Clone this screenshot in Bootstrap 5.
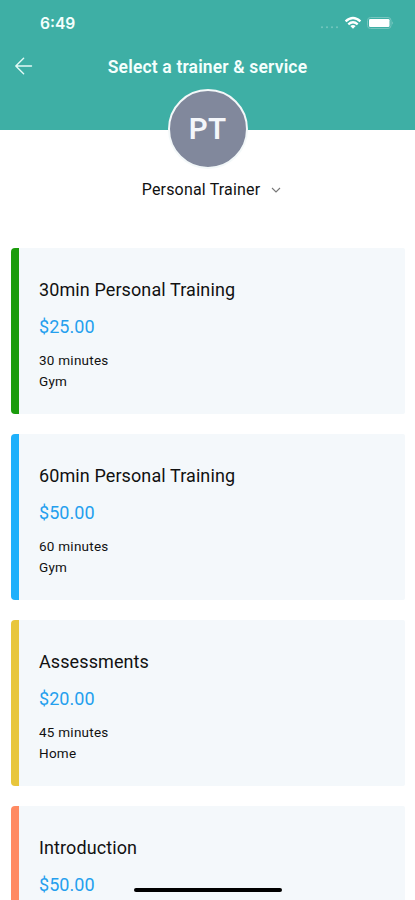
<!DOCTYPE html>
<html lang="en">
<head>
<meta charset="utf-8">
<meta name="viewport" content="width=device-width, initial-scale=1">
<title>Select a trainer &amp; service</title>
<link href="https://cdn.jsdelivr.net/npm/bootstrap@5.3.0/dist/css/bootstrap.min.css" rel="stylesheet">
<style>
body { font-family: Roboto, "Liberation Sans", sans-serif; color: #111; }
.screen { height: 900px; }
.top-area { height: 129.5px; background: #3eafa5; color: #f4fffd; }
.status-row { height: 46px; padding: 0 21px 0 40px; }
.clock { font-family: Inter, sans-serif; font-size: 15.6px; font-weight: 600; line-height: 46px; padding-top: 1px; }
.title-row { height: 40px; padding-left: 15px; padding-right: 15px; }
.page-title { font-size: 17.5px; font-weight: 600; line-height: 40px; letter-spacing: .16px; padding-top: 1px; }
.side { width: 18px; }
.avatar { width: 80px; height: 80px; margin-top: -41px; border: 2px solid #f3f8f9; background: #81889c; color: #f4f6fa; font-size: 29.5px; font-weight: 600; letter-spacing: .3px; padding-top: 1px; }
.trainer { height: 24px; margin-top: 9px; font-size: 16px; letter-spacing: .17px; line-height: 24px; padding-left: 9px; }
.services { padding: 46.5px 10px 0 11px; gap: 20px; }
.service { height: 166px; border: 0; border-left: 7.5px solid var(--tone); border-radius: 4px 2px 2px 4px; background: #f4f8fb; padding: 29px 0 0 20px; color: #111; }
.service h2 { font-size: 18px; font-weight: 400; line-height: 26px; letter-spacing: .1px; margin: 0 0 12px; }
.service { border-left-width: 8px; }
.price { color: #249fee; font-size: 18px; line-height: 24px; letter-spacing: .05px; margin-bottom: 11px; }
.info { font-size: 13.5px; line-height: 21px; letter-spacing: .25px; }
.green { --tone: #1b9c0c; }
.blue { --tone: #1eb0fb; }
.yellow { --tone: #e8c63c; }
.coral { --tone: #ff8a62; }
.home-bar { left: 134px; top: 888px; width: 148px; height: 4px; border-radius: 2px; background: #000; }
</style>
</head>
<body class="bg-white overflow-hidden">
<main class="screen position-relative overflow-hidden">
  <header class="top-area">
    <div class="status-row d-flex justify-content-between align-items-center">
      <span class="clock">6:49</span>
      <svg width="76" height="16" viewBox="318 15 76 16" aria-hidden="true">
        <g fill="#9ad6d0" opacity=".6"><circle cx="322" cy="27.3" r="1"/><circle cx="327" cy="27.3" r="1"/><circle cx="332" cy="27.3" r="1"/><circle cx="337" cy="27.3" r="1"/></g>
        <g fill="none" stroke="#fff" stroke-width="2.3"><path d="M345.600 21.400Q353 14.600 360.400 21.400"/><path d="M348.300 24.300Q353 20.200 357.700 24.300"/></g>
        <path d="M350.300 26Q353 23.900 355.700 26L353 28.800Z" fill="#fff"/>
        <rect x="367.500" y="17.500" width="23.500" height="11" rx="3" fill="none" stroke="#76c5be"/>
        <rect x="369" y="19" width="20.500" height="8" rx="1.300" fill="#fff"/>
        <path d="M392.300 21.300q1.600 1.700 0 3.400z" fill="#8fd0ca"/>
      </svg>
    </div>
    <div class="title-row d-flex justify-content-between align-items-center">
      <svg class="side" height="18" viewBox="0 0 18 18" fill="none" stroke="#e4faf6" stroke-width="1.4" stroke-linecap="round" stroke-linejoin="round" aria-label="Back"><path d="M16.500 9H.8M8.600 1.200.8 9l7.800 7.800"/></svg>
      <h1 class="page-title m-0">Select a trainer &amp; service</h1>
      <span class="side"></span>
    </div>
  </header>
  <div class="avatar rounded-circle mx-auto d-flex justify-content-center align-items-center">PT</div>
  <div class="trainer d-flex justify-content-center align-items-center">
    <span>Personal Trainer</span>
    <svg class="ms-2" width="14" height="8" viewBox="-1 0 14 8" fill="none" stroke="#777" stroke-width="1.1" aria-hidden="true"><path d="M3 2l4 4 4-4"/></svg>
  </div>
  <section class="services d-flex flex-column">
    <article class="service card flex-shrink-0 green"><h2>30min Personal Training</h2><div class="price">$25.00</div><div class="info">30 minutes</div><div class="info">Gym</div></article>
    <article class="service card flex-shrink-0 blue"><h2>60min Personal Training</h2><div class="price">$50.00</div><div class="info">60 minutes</div><div class="info">Gym</div></article>
    <article class="service card flex-shrink-0 yellow"><h2>Assessments</h2><div class="price">$20.00</div><div class="info">45 minutes</div><div class="info">Home</div></article>
    <article class="service card flex-shrink-0 coral"><h2>Introduction</h2><div class="price">$50.00</div></article>
  </section>
  <div class="home-bar position-absolute"></div>
</main>
<script src="https://cdn.jsdelivr.net/npm/bootstrap@5.3.0/dist/js/bootstrap.bundle.min.js"></script>
</body>
</html>
